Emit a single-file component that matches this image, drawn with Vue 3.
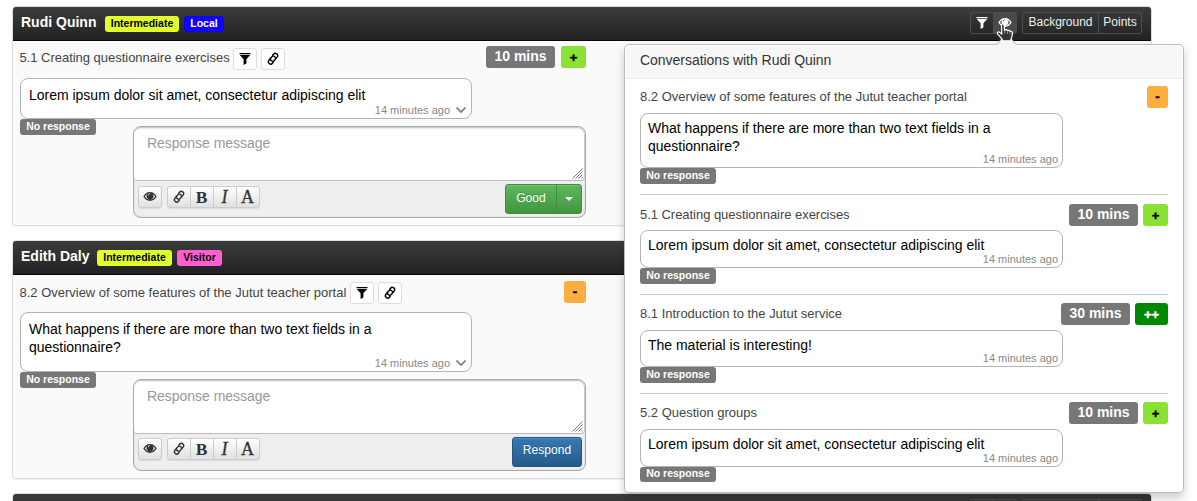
<script setup>
import { h } from 'vue'

const paths = {
  filter: 'M1.500 1h11v1.200H1.500z M1.800 2.900h10.400L8.400 7.200V11.600L5.600 13V7.200z',
  eye: 'M7 2C3.900 2 1.700 4 .3 6.500c1.500 2.700 3.800 4.400 6.700 4.400s5.200-1.700 6.700-4.400C12.300 4 10.100 2 7 2z M7 9.700c-2.200 0-3.900-1.200-5.200-3.200.7-1.100 1.500-1.900 2.500-2.400a3.400 3.400 0 1 0 5.400 0c1 .5 1.800 1.300 2.500 2.400C10.900 8.500 9.200 9.700 7 9.700z M6.800 3.200a1.700 1.700 0 0 0-1.700 1.700c0 .4.8.4.8 0 0-.6.400-1 .900-1 .5 0 .5-.7 0-.7z',
}

const Icon = (props) =>
  h('svg', { class: 'icon', width: 14, height: 14, viewBox: '0 0 14 14' },
    props.name === 'link'
      ? [h('g', { transform: 'rotate(-50 7 6.700)', fill: 'none', stroke: 'currentColor', 'stroke-width': 1.4, 'stroke-linecap': 'round' }, [
          h('path', { d: 'M4.600 9.200H3.200a2.100 2.100 0 0 1 0-4.600H7.400a2.200 2.200 0 0 1 1 4.200' }),
          h('path', { d: 'M9.400 4.200h1.400a2.100 2.100 0 0 1 0 4.600H6.600a2.200 2.200 0 0 1-1-4.200' }),
        ])]
      : [h('path', { d: paths[props.name], fill: 'currentColor', 'fill-rule': 'evenodd' })])
Icon.props = ['name']

const lorem = 'Lorem ipsum dolor sit amet, consectetur adipiscing elit'
const question = 'What happens if there are more than two text fields in a questionnaire?'

const panels = [
  { name: 'Rudi Quinn', tag: 'Local', tagClass: 'local', title: '5.1 Creating questionnaire exercises', mins: '10 mins', mark: '+', markClass: 'plus', text: lorem, size: 'short', button: 'Good' },
  { name: 'Edith Daly', tag: 'Visitor', tagClass: 'visitor', title: '8.2 Overview of some features of the Jutut teacher portal', mark: '-', markClass: 'minus', text: question, size: 'tall', button: 'Respond' },
]
const entries = [
  { title: '8.2 Overview of some features of the Jutut teacher portal', mark: '-', markClass: 'minus', text: question, cls: 'e1' },
  { title: '5.1 Creating questionnaire exercises', mins: '10 mins', mark: '+', markClass: 'plus', text: lorem, cls: 'e2' },
  { title: '8.1 Introduction to the Jutut service', mins: '30 mins', mark: '++', markClass: 'plusplus', text: 'The material is interesting!', cls: 'e3' },
  { title: '5.2 Question groups', mins: '10 mins', mark: '+', markClass: 'plus', text: lorem, cls: 'e4' },
]
</script>

<template>
  <div class="page">
    <section v-for="(p, i) in panels" :key="p.name" class="panel" :class="p.size">
      <header class="bar">
        <span class="name">{{ p.name }}</span>
        <span class="tag level">Intermediate</span>
        <span class="tag" :class="p.tagClass">{{ p.tag }}</span>
        <div v-if="i === 0" class="bar-tools">
          <div class="group">
            <span class="dbtn"><Icon name="filter" /></span>
            <span class="dbtn active"><Icon name="eye" /></span>
          </div>
          <div class="group">
            <span class="dbtn bg">Background</span>
            <span class="dbtn pts">Points</span>
          </div>
        </div>
      </header>
      <div class="body">
        <div class="head">
          <span class="title">{{ p.title }}</span>
          <span class="mini"><Icon name="filter" /></span>
          <span class="mini"><Icon name="link" /></span>
          <div class="marks">
            <span v-if="p.mins" class="mins">{{ p.mins }}</span>
            <span class="mark" :class="p.markClass">{{ p.mark }}</span>
          </div>
        </div>
        <div class="msg">
          <p>{{ p.text }}</p>
          <span class="time">14 minutes ago
            <svg width="12" height="8" viewBox="0 0 12 8"><path d="M1.500 1.500 6 6l4.500-4.500" fill="none" stroke="#777" stroke-width="1.700" /></svg>
          </span>
        </div>
        <div class="reply">
          <span class="status">No response</span>
          <div class="editor">
            <div class="area">Response message
              <svg class="grip" width="11" height="11" viewBox="0 0 11 11"><path d="M0.500 10.500l10-10M3.500 10.500l7-7M6.500 10.500l4-4M9 10.500l1.500-1.500" stroke="#666" stroke-width="0.900" /></svg>
            </div>
            <div class="tools">
              <span class="tbtn solo"><Icon name="eye" /></span>
              <div class="tgroup">
                <span class="tbtn"><Icon name="link" /></span>
                <span class="tbtn glyph b">B</span>
                <span class="tbtn glyph it">I</span>
                <span class="tbtn glyph">A</span>
              </div>
              <div v-if="p.button === 'Good'" class="send good">
                <span class="label">Good</span>
                <span class="caret"><i></i></span>
              </div>
              <div v-else class="send respond"><span class="label">Respond</span></div>
            </div>
          </div>
        </div>
      </div>
    </section>
    <section class="panel next">
      <header class="bar">
        <div class="bar-tools">
          <div class="group">
            <span class="dbtn"><Icon name="filter" /></span>
            <span class="dbtn"><Icon name="eye" /></span>
          </div>
          <div class="group">
            <span class="dbtn bg"></span>
            <span class="dbtn pts"></span>
          </div>
        </div>
      </header>
    </section>

    <aside class="popover">
      <i class="arrow"></i>
      <h3>Conversations with Rudi Quinn</h3>
      <div class="entries">
        <div v-for="e in entries" :key="e.cls" class="entry" :class="e.cls">
          <div class="ehead">
            <span class="title">{{ e.title }}</span>
            <div class="marks">
              <span v-if="e.mins" class="mins">{{ e.mins }}</span>
              <span class="mark" :class="e.markClass">{{ e.mark }}</span>
            </div>
          </div>
          <div class="msg">
            <p>{{ e.text }}</p>
            <span class="time">14 minutes ago</span>
          </div>
          <span class="status">No response</span>
        </div>
      </div>
    </aside>

    <svg class="cursor" width="19" height="20" viewBox="0 0 19 20">
      <path d="M5.500 2.300c0-1.800 2.600-1.800 2.700 0l.3 5 .9-.4c1-.4 1.700 0 2 .7 1-.5 2-.2 2.400.7 1.300-.3 2.500.3 2.600 1.700.2 2.700-.3 4-1.400 5.800l-.2 2H6.400l-.3-1.600C4.300 14 2.700 12.300 1.500 10.800c-.8-1.200.8-2.500 2.200-1.400l2.100 1.700z" fill="#333" stroke="#fff" stroke-width="1.200" stroke-linejoin="round" />
      <path d="M8.900 8v2.500M11.500 8.600v2.200M13.900 9.400v1.800" stroke="#ddd" stroke-width="0.600" />
    </svg>
  </div>
</template>

<style>
body { background: #fff; overflow: hidden; }
</style>

<style scoped>
.page { position: relative; width: 1197px; height: 501px; overflow: hidden; box-sizing: border-box; padding: 6px 0 0 12px; font: 14px/20px "Liberation Sans", Arial, sans-serif; color: #333; }
.page *, .page { box-sizing: border-box; }
.page :deep(svg) { display: block; flex: none; }
.panel { width: 1140px; border: 1px solid #ddd; border-radius: 4px; background: #fafafa; box-shadow: 0 1px 1px rgba(0,0,0,.05); margin-bottom: 14px; }
.short { height: 220px; }
.tall { height: 239px; }
.next { height: 200px; }
.bar { height: 34px; background: linear-gradient(#3c3c3c, #222); border-bottom: 1px solid #080808; border-radius: 3px 3px 0 0; display: flex; align-items: flex-start; padding-left: 8px; color: #fff; }
.name { font-size: 14px; font-weight: bold; line-height: 18px; margin: 6px 8px 0 0; white-space: nowrap; }
.short .name { width: 76px; }
.tall .name { width: 68px; }
.tag { height: 16px; line-height: 15px; margin: 9px 5px 0 0; border-radius: 3px; font-size: 10.500px; font-weight: bold; text-align: center; }
.level { width: 74px; background: #e0ff2d; color: #000; }
.tall .level { width: 75px; }
.local { width: 40px; background: #1100ff; color: #fff; }
.visitor { width: 45px; background: #ff5fd2; color: #000; }
.bar-tools { display: flex; gap: 5px; margin: 5px 9px 0 auto; }
.group { display: flex; border: 1px solid #4e4e4e; border-radius: 3px; height: 22px; }
.dbtn { display: flex; align-items: center; justify-content: center; width: 22px; color: #fff; font-size: 12px; line-height: 18px; }
.dbtn + .dbtn { border-left: 1px solid #4e4e4e; width: 23px; }
.dbtn.active { background: #4a4a4a; }
.dbtn.bg { width: 75px; color: #eee; padding-bottom: 2px; }
.dbtn.pts { width: 43px; color: #eee; padding-bottom: 2px; }
.body { padding: 0 0 0 7px; }
.head { display: flex; width: 566px; height: 37px; }
.title { font-size: 13px; line-height: 16px; color: #444; white-space: nowrap; letter-spacing: -.01px; }
.head .title { width: 209px; margin: 9px 4px 0 -.5px; letter-spacing: -.025px; }
.tall .head .title { width: 327px; margin: 10px 4px 0 -.5px; letter-spacing: -.01px; }
.short .mini:nth-child(2) { margin-left: .5px; }
.tall .mini:nth-child(2) { margin-left: -.5px; }
.mini { width: 24px; height: 22px; margin: 7px 4px 0 0; border: 1px solid #ddd; border-radius: 3px; background: #fff; color: #000; display: flex; align-items: center; justify-content: center; }
.marks { display: flex; gap: 5px; margin-left: auto; height: 22px; font-weight: bold; }
.head .marks { margin-top: 5px; gap: 6px; }
.tall .head .marks { margin-top: 6px; }
.mins { width: 69px; background: #777; color: #fff; border-radius: 3px; font-size: 14px; line-height: 20px; text-align: center; }
.mark { width: 25px; border-radius: 3px; font-size: 13px; line-height: 24px; text-align: center; color: #000; -webkit-text-stroke: .4px currentColor; }
.plus { background: #8ae234; }
.minus { width: 22px; background: #fcaf3e; line-height: 22px; }
.entry .minus { width: 21px; }
.plusplus { width: 33px; background: #080; color: #fff; }
.msg { position: relative; width: 452px; border: 1px solid #b3b3b3; border-radius: 8px; background: #fff; color: #000; font-size: 14px; line-height: 18px; letter-spacing: -.012px; padding: 7px 8px; }
.msg p { margin: 0; max-width: 380px; }
.short .msg { height: 41px; }
.tall .msg { height: 60px; }
.time { position: absolute; right: 4px; bottom: 1px; display: flex; align-items: center; gap: 5px; font-size: 11px; line-height: 14px; letter-spacing: 0; color: #888; }
.status { display: block; width: 76px; height: 16px; line-height: 15px; background: #777; color: #fff; border-radius: 3px; font-size: 10.500px; font-weight: bold; text-align: center; }
.reply { display: flex; }
.editor { width: 453px; height: 92px; margin: 7px 0 0 37px; border: 1px solid #aaa; border-radius: 8px; background: #eee; box-shadow: inset 0 0 1px #aaa; }
.area { position: relative; height: 54px; background: #fff; border: 1px solid #ccc; border-width: 1px 1px 1px 0; border-bottom-color: #bbb; border-radius: 7px 7px 4px 4px; padding: 5px 13px; color: #999; letter-spacing: -.03px; box-shadow: inset 0 1px 1px rgba(0,0,0,.075); }
.grip { position: absolute; right: 1px; bottom: 1px; }
.tools { display: flex; align-items: flex-start; padding: 3px 3px 0 4px; }
.tbtn { width: 23px; display: flex; align-items: center; justify-content: center; color: #333; }
.tbtn.solo, .tgroup { height: 22px; margin-top: 2px; border: 1px solid #ccc; border-radius: 3px; background: linear-gradient(#fff, #e0e0e0); box-shadow: 0 1px 1px rgba(0,0,0,.08); }
.tall .tbtn.solo, .tall .tgroup { margin-top: 1px; }
.tbtn.solo { width: 24px; }
.tgroup { display: flex; margin-left: 5px; width: 93px; }
.tgroup .tbtn:first-child { width: 22px; }
.tgroup .tbtn + .tbtn { border-left: 1px solid #ccc; }
.glyph { font: 18px/18px "Liberation Serif", serif; -webkit-text-stroke: .3px #333; padding: 0 1px 1px 0; }
.b { font-weight: bold; -webkit-text-stroke: 0; font-size: 17.500px; }
.it { font-style: italic; }
.send { display: flex; margin-left: auto; height: 30px; color: #fff; border-radius: 3px; text-shadow: 0 -1px 0 rgba(0,0,0,.2); box-shadow: inset 0 1px 0 rgba(255,255,255,.15); }
.send .label { flex: 1; text-align: center; line-height: 26px; font-size: 12px; letter-spacing: .05px; }
.good { width: 77px; background: linear-gradient(#5cb85c, #419641); border: 1px solid #3e8f3e; }
.respond { width: 70px; background: linear-gradient(#337ab7, #265a88); border: 1px solid #245580; }
.respond .label { line-height: 25px; }
.caret { width: 25px; border-left: 1px solid #3e8f3e; display: flex; align-items: center; justify-content: center; }
.caret i { border: 4px solid transparent; border-top-color: #fff; border-bottom: 0; }
.popover { position: absolute; left: 624px; top: 44px; width: 560px; height: 449px; background: #fff; border: 1px solid #bbb; border-radius: 5px; box-shadow: 0 5px 10px rgba(0,0,0,.2); padding: 1px; }
.arrow { position: absolute; left: 374px; top: -8px; width: 15px; height: 15px; transform: rotate(45deg); background: #f7f7f7; border: 1px solid #bbb; border-right: 0; border-bottom: 0; }
h3 { position: relative; margin: 0; height: 33px; padding: 4px 14px 0; background: #f7f7f7; border-bottom: 1px solid #ebebeb; border-radius: 4px 4px 0 0; font-size: 14px; font-weight: normal; line-height: 20px; letter-spacing: -.03px; }
.entries { padding: 0 14px; }
.entry { border-bottom: 1px solid #ccc; height: 99px; }
.entry.e1 { height: 116px; }
.entry.e2 { height: 100px; }
.entry.e4 { border: 0; }
.ehead { display: flex; height: 35px; padding-top: 8px; }
.e1 .ehead { height: 34px; padding-top: 7px; }
.e2 .ehead { padding-top: 9px; }
.ehead .title { margin-top: 3px; }
.e2 .title { letter-spacing: -.04px; }
.entry .msg { width: 423px; height: 38px; padding: 5px 7px; }
.entry.e1 .msg { height: 55px; }
.entry.e3 .msg { height: 37px; }
.e4 .status { height: 15px; line-height: 13px; }
.cursor { position: absolute; left: 996px; top: 23px; }
</style>
